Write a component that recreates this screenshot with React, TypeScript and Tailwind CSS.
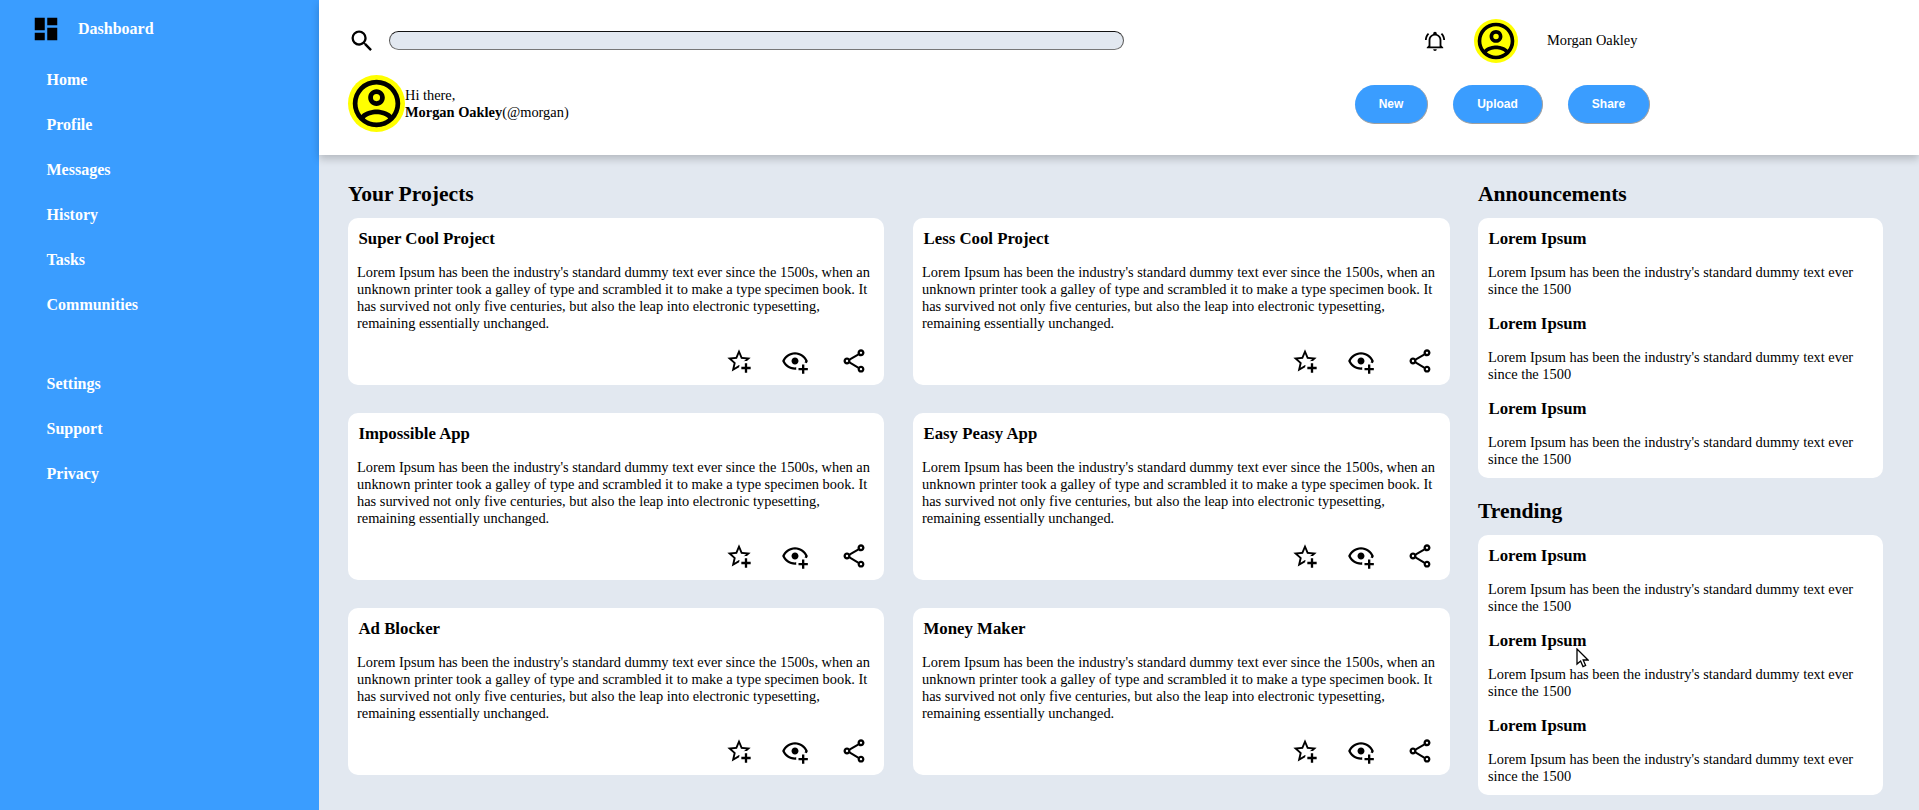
const icons = {
  magnify: 'M9.5,3A6.5,6.5 0 0,1 16,9.5C16,11.11 15.41,12.59 14.44,13.73L14.71,14H15.5L20.5,19L19,20.5L14,15.5V14.71L13.73,14.44C12.59,15.41 11.11,16 9.5,16A6.5,6.5 0 0,1 3,9.5A6.5,6.5 0 0,1 9.5,3M9.5,5C7,5 5,7 5,9.5C5,12 7,14 9.5,14C12,14 14,12 14,9.5C14,7 12,5 9.5,5Z',
  dashboard: 'M13,3V9H21V3M13,21H21V11H13M3,21H11V15H3M3,13H11V3H3V13Z',
  account: 'M12,2A10,10 0 0,0 2,12A10,10 0 0,0 12,22A10,10 0 0,0 22,12A10,10 0 0,0 12,2M7.07,18.28C7.5,17.38 10.12,16.5 12,16.5C13.88,16.5 16.5,17.38 16.93,18.28C15.57,19.36 13.86,20 12,20C10.14,20 8.43,19.36 7.07,18.28M18.36,16.83C16.93,15.09 13.46,14.5 12,14.5C10.54,14.5 7.07,15.09 5.64,16.83C4.62,15.5 4,13.82 4,12C4,7.59 7.59,4 12,4C16.41,4 20,7.59 20,12C20,13.82 19.38,15.5 18.36,16.83M12,6C10.06,6 8.5,7.56 8.5,9.5C8.5,11.44 10.06,13 12,13C13.94,13 15.5,11.44 15.5,9.5C15.5,7.56 13.94,6 12,6M12,11A1.5,1.5 0 0,1 10.5,9.5A1.5,1.5 0 0,1 12,8A1.5,1.5 0 0,1 13.5,9.5A1.5,1.5 0 0,1 12,11Z',
  bell: 'M10,21H14A2,2 0 0,1 12,23A2,2 0 0,1 10,21M21,19V20H3V19L5,17V11C5,7.9 7.03,5.17 10,4.29C10,4.19 10,4.1 10,4A2,2 0 0,1 12,2A2,2 0 0,1 14,4C14,4.1 14,4.19 14,4.29C16.97,5.17 19,7.9 19,11V17L21,19M17,11A5,5 0 0,0 12,6A5,5 0 0,0 7,11V18H17V11M19.75,3.19L18.33,4.61C20.04,6.3 21,8.6 21,11H23C23,8.07 21.84,5.25 19.75,3.19M1,11H3C3,8.6 3.96,6.3 5.67,4.61L4.25,3.19C2.16,5.25 1,8.07 1,11Z',
  star: 'M5.8 21L7.4 14L2 9.2L9.2 8.6L12 2L14.8 8.6L22 9.2L18.8 12H18C17.3 12 16.6 12.1 15.9 12.4L18.1 10.5L13.7 10.1L12 6.1L10.3 10.1L5.9 10.5L9.2 13.4L8.2 17.7L12 15.4L12.5 15.7C12.3 16.2 12.1 16.8 12.1 17.3L5.8 21M17 14V17H14V19H17V22H19V19H22V17H19V14H17Z',
  eye: 'M12 4.5C7 4.5 2.73 7.61 1 12C2.73 16.39 7 19.5 12 19.5C12.36 19.5 12.72 19.5 13.08 19.45C13.03 19.13 13 18.82 13 18.5C13 18.14 13.04 17.78 13.1 17.42C12.74 17.46 12.37 17.5 12 17.5C8.24 17.5 4.83 15.36 3.18 12C4.83 8.64 8.24 6.5 12 6.5S19.17 8.64 20.82 12C20.62 12.41 20.4 12.8 20.15 13.19C20.82 13.32 21.46 13.56 22.05 13.9C22.4 13.3 22.72 12.66 23 12C21.27 7.61 17 4.5 12 4.5M12 9C10.34 9 9 10.34 9 12S10.34 15 12 15 15 13.66 15 12 13.66 9 12 9M18 15V18H15V20H18V23H20V20H23V18H20V15H18Z',
  share: 'M18 16.08C17.24 16.08 16.56 16.38 16.04 16.85L8.91 12.7C8.96 12.47 9 12.24 9 12S8.96 11.53 8.91 11.3L15.96 7.19C16.5 7.69 17.21 8 18 8C19.66 8 21 6.66 21 5S19.66 2 18 2 15 3.34 15 5C15 5.24 15.04 5.47 15.09 5.7L8.04 9.81C7.5 9.31 6.79 9 6 9C4.34 9 3 10.34 3 12S4.34 15 6 15C6.79 15 7.5 14.69 8.04 14.19L15.16 18.34C15.11 18.55 15.08 18.77 15.08 19C15.08 20.61 16.39 21.91 18 21.91S20.92 20.61 20.92 19C20.92 17.39 19.61 16.08 18 16.08M18 4C18.55 4 19 4.45 19 5S18.55 6 18 6 17 5.55 17 5 17.45 4 18 4M6 13C5.45 13 5 12.55 5 12S5.45 11 6 11 7 11.45 7 12 6.55 13 6 13M18 20C17.45 20 17 19.55 17 19S17.45 18 18 18 19 18.45 19 19 18.55 20 18 20Z',
};

const LOREM =
  "Lorem Ipsum has been the industry's standard dummy text ever since the 1500s, when an unknown printer took a galley of type and scrambled it to make a type specimen book. It has survived not only five centuries, but also the leap into electronic typesetting, remaining essentially unchanged.";
const LOREM_SHORT = "Lorem Ipsum has been the industry's standard dummy text ever since the 1500";

const projects = ['Super Cool Project', 'Less Cool Project', 'Impossible App', 'Easy Peasy App', 'Ad Blocker', 'Money Maker'];

function Icon({ d, className }: { d: string; className: string }) {
  return (
    <svg viewBox="0 0 24 24" className={className} fill="currentColor">
      <path d={d} />
    </svg>
  );
}

function Sidebar() {
  return (
    <aside className="w-[319px] shrink-0 bg-[#3a9dff] text-white font-bold">
      <div className="flex items-center h-[29px] mt-[14px] ml-[31px] gap-[17px]">
        <Icon d={icons.dashboard} className="w-[30px] h-[30px] text-black" />
        <span>Dashboard</span>
      </div>
      <nav className="mt-[14px] ml-[46.5px] flex flex-col">
        {['Home', 'Profile', 'Messages', 'History', 'Tasks', 'Communities'].map(item => (
          <a key={item} className="h-[45px] flex items-center">{item}</a>
        ))}
      </nav>
      <nav className="mt-[34px] ml-[46.5px] flex flex-col">
        {['Settings', 'Support', 'Privacy'].map(item => (
          <a key={item} className="h-[45px] flex items-center">{item}</a>
        ))}
      </nav>
    </aside>
  );
}

function Header() {
  return (
    <header className="relative h-[155px] shrink-0 bg-white shadow-[0_4px_8px_rgba(0,0,0,0.2)] z-10 pl-[29px] pr-[269px]">
      <div className="flex items-center h-[81px]">
        <Icon d={icons.magnify} className="w-[28px] h-[28px] text-black" />
        <div className="ml-[13px] w-[735px] h-[19px] rounded-[10px] bg-[#e2e8f0] border border-t-[#111] border-l-[#555] border-r-[#555] border-b-[#777]" />
        <Icon d={icons.bell} className="ml-[300px] w-[22px] h-[22px] text-black" />
        <div className="ml-[28px] w-[44px] h-[44px] rounded-full bg-[#ffff00] flex items-center justify-center">
          <Icon d={icons.account} className="w-[44px] h-[44px] text-black" />
        </div>
        <span className="ml-[29px] text-[14.4px]">Morgan Oakley</span>
      </div>
      <div className="flex items-center justify-between h-[57px] -mt-[6px]">
        <div className="flex items-center">
          <div className="w-[57px] h-[57px] rounded-full bg-[#ffff00]">
            <Icon d={icons.account} className="w-[57px] h-[57px] text-black" />
          </div>
          <div className="mt-[1px] text-[14.4px] leading-[17px]">
            <div>Hi there,</div>
            <div><b>Morgan Oakley</b>(@morgan)</div>
          </div>
        </div>
        <div className="mt-[2px] flex items-center gap-[25px] font-['Liberation_Sans',sans-serif] text-[12px] font-bold text-white">
          {[['New', 'w-[73px]'], ['Upload', 'w-[90px]'], ['Share', 'w-[82px]']].map(([label, width]) => (
            <button key={label} className={`${width} h-[39px] rounded-[20px] bg-[#3a9dff] border-b border-r border-[#a0a0a0]`}>{label}</button>
          ))}
        </div>
      </div>
    </header>
  );
}

function ProjectCard({ title }: { title: string }) {
  return (
    <div className="h-[167px] bg-white rounded-[10px] px-[10px] pt-[11px] flex flex-col">
      <h3 className="pl-[0.5px] text-[16.8px] leading-[20px] font-bold">{title}</h3>
      <p className="mt-[15px] -ml-[1px] text-[14.4px] leading-[17px]">{LOREM}</p>
      <div className="mt-auto mb-[10px] pr-[6px] flex justify-end gap-[28px]">
        <Icon d={icons.star} className="w-[28px] h-[28px]" />
        <Icon d={icons.eye} className="w-[28px] h-[28px]" />
        <Icon d={icons.share} className="ml-[3px] w-[28px] h-[28px]" />
      </div>
    </div>
  );
}

function SideCard() {
  return (
    <div className="h-[260px] bg-white rounded-[10px] px-[10px] pt-[11px] flex flex-col gap-[16px]">
      {[0, 1, 2].map(i => (
        <div key={i}>
          <h3 className="pl-[0.5px] text-[16.8px] leading-[20px] font-bold">Lorem Ipsum</h3>
          <p className="mt-[15px] text-[14.4px] leading-[17px]">{LOREM_SHORT}</p>
        </div>
      ))}
    </div>
  );
}

export default function App() {
  return (
    <div className="relative flex h-[810px] overflow-hidden bg-[#e2e8f0] text-black font-['Liberation_Serif',serif]">
      <Sidebar />
      <div className="flex-1 flex flex-col min-w-0">
        <Header />
        <main className="pl-[29px] pr-[36px] grid grid-cols-[1102px_405px] gap-x-[28px]">
          <section>
            <h2 className="mt-[27px] h-[36px] text-[21.6px] leading-[24px] font-bold">Your Projects</h2>
            <div className="grid grid-cols-[536px_537px] gap-x-[29px] gap-y-[28px]">
              {projects.map(p => <ProjectCard key={p} title={p} />)}
            </div>
          </section>
          <section>
            <h2 className="mt-[27px] h-[36px] text-[21.6px] leading-[24px] font-bold">Announcements</h2>
            <SideCard />
            <h2 className="mt-[21px] h-[36px] text-[21.6px] leading-[24px] font-bold">Trending</h2>
            <SideCard />
          </section>
        </main>
      </div>
      {/* mouse pointer caught in the screenshot */}
      <svg viewBox="0 0 13 20" className="absolute left-[1576px] top-[648px] w-[13px] h-[20px] z-20">
        <path d="M1 1V16L4.6 13L7 18.6L9.6 17.5L7.2 12H12Z" fill="white" stroke="black" strokeWidth="1.3" />
      </svg>
    </div>
  );
}
